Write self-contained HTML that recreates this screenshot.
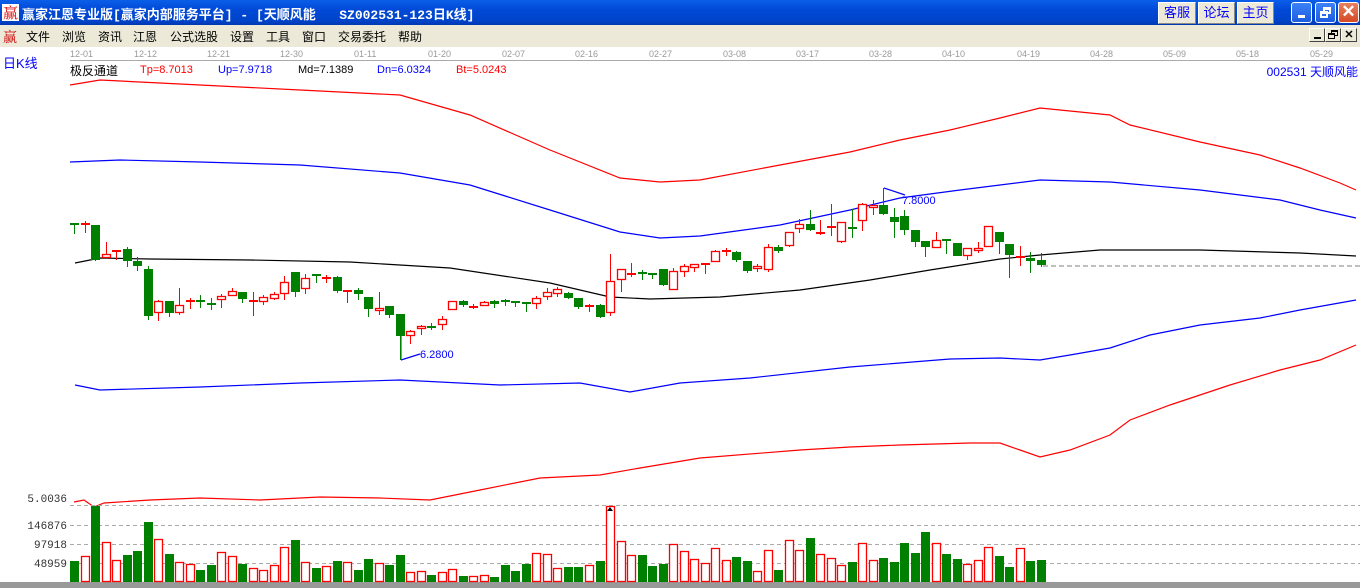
<!DOCTYPE html>
<html><head><meta charset="utf-8"><style>
*{margin:0;padding:0;box-sizing:border-box}
body{width:1360px;height:588px;overflow:hidden;background:#fff;font-family:"Liberation Sans","Noto Sans CJK SC",sans-serif;position:relative}
.title{position:absolute;left:0;top:0;width:1360px;height:25px;background:linear-gradient(#0a5ee8,#0149d6 40%,#0043c8 85%,#0038b0);}
.title .t{position:absolute;left:22px;top:4px;color:#fff;font-weight:bold;font-size:13px;font-family:"Liberation Mono","Noto Sans CJK SC",monospace;white-space:pre}
.ico{position:absolute;left:2px;top:4px;width:17px;height:17px;background:#fff;color:#d00;font-size:15px;line-height:17px;text-align:center;font-family:"Noto Serif CJK SC",serif}
.btn{position:absolute;top:2px;height:22px;background:#ece9d8;border:1px solid #fff;border-right-color:#888;border-bottom-color:#888;color:#00f;font-size:13px;line-height:20px;text-align:center}
.wb{position:absolute;top:2px;width:21px;height:21px;border:1px solid #fff;border-radius:3px;background:linear-gradient(#3d82f7,#1c5ce0)}
.menu{position:absolute;left:0;top:25px;width:1360px;height:22px;background:#ece9d8}
.menu span{position:absolute;top:3px;font-size:12px;color:#000}
.mdi{position:absolute;top:28px;width:16px;height:14px;background:#ece9d8;border:1px solid #fff;border-right-color:#444;border-bottom-color:#444}
.dt{position:absolute;top:49px;font-size:9px;color:#999}
</style></head><body>
<div class="title">
<div class="ico">赢</div>
<div class="t">赢家江恩专业版[赢家内部服务平台] - [天顺风能   SZ002531-123日K线]</div>
<div class="btn" style="left:1158px;width:38px">客服</div>
<div class="btn" style="left:1198px;width:37px">论坛</div>
<div class="btn" style="left:1237px;width:37px">主页</div>
<div class="wb" style="left:1291px"><div style="position:absolute;left:6px;top:12px;width:7px;height:3px;background:#fff"></div></div>
<div class="wb" style="left:1315px"><div style="position:absolute;left:7px;top:4px;width:8px;height:7px;border:2px solid #fff;border-top-width:3px"></div><div style="position:absolute;left:4px;top:8px;width:8px;height:7px;border:2px solid #fff;border-top-width:3px;background:#2a6cea"></div></div>
<div class="wb" style="left:1338px;background:linear-gradient(#e8805f,#d54a25);color:#fff;font-size:17px;line-height:18px;text-align:center;font-weight:bold">✕</div>
</div>
<div class="menu">
<span style="left:3px;color:#c00;font-size:14px;top:2px;font-family:'Noto Serif CJK SC',serif">赢</span>
<span style="left:26px">文件</span><span style="left:62px">浏览</span><span style="left:98px">资讯</span><span style="left:133px">江恩</span><span style="left:170px">公式选股</span><span style="left:230px">设置</span><span style="left:266px">工具</span><span style="left:302px">窗口</span><span style="left:338px">交易委托</span><span style="left:398px">帮助</span>
</div>
<div class="mdi" style="left:1309px"><div style="position:absolute;left:4px;top:8px;width:7px;height:2px;background:#000"></div></div>
<div class="mdi" style="left:1325px"><div style="position:absolute;left:5px;top:1px;width:7px;height:6px;border:1px solid #000;border-top-width:2px"></div><div style="position:absolute;left:2px;top:4px;width:7px;height:6px;border:1px solid #000;border-top-width:2px;background:#ece9d8"></div></div>
<div class="mdi" style="left:1341px;font-size:11px;font-weight:bold;text-align:center;line-height:12px">✕</div>

<div class="dt" style="left:70px">12-01</div><div class="dt" style="left:134px">12-12</div><div class="dt" style="left:207px">12-21</div><div class="dt" style="left:280px">12-30</div><div class="dt" style="left:354px">01-11</div><div class="dt" style="left:428px">01-20</div><div class="dt" style="left:502px">02-07</div><div class="dt" style="left:575px">02-16</div><div class="dt" style="left:649px">02-27</div><div class="dt" style="left:723px">03-08</div><div class="dt" style="left:796px">03-17</div><div class="dt" style="left:869px">03-28</div><div class="dt" style="left:942px">04-10</div><div class="dt" style="left:1017px">04-19</div><div class="dt" style="left:1090px">04-28</div><div class="dt" style="left:1163px">05-09</div><div class="dt" style="left:1236px">05-18</div><div class="dt" style="left:1310px">05-29</div>
<div style="position:absolute;left:70px;top:60px;width:1290px;height:1px;background:#aaa"></div>
<div style="position:absolute;left:3px;top:53px;font-size:13px;color:#00f">日K线</div>
<div style="position:absolute;left:70px;top:62px;font-size:12px;color:#000">极反通道</div>
<div style="position:absolute;left:140px;top:64px;font-size:11px;color:#f00">Tp=8.7013</div>
<div style="position:absolute;left:218px;top:64px;font-size:11px;color:#00f">Up=7.9718</div>
<div style="position:absolute;left:298px;top:64px;font-size:11px;color:#000">Md=7.1389</div>
<div style="position:absolute;left:377px;top:64px;font-size:11px;color:#00f">Dn=6.0324</div>
<div style="position:absolute;left:456px;top:64px;font-size:11px;color:#f00">Bt=5.0243</div>
<div style="position:absolute;right:2px;top:63px;font-size:12px;color:#00f">002531 天顺风能</div>

<svg style="position:absolute;left:0;top:0" width="1360" height="588">
<g fill="none" stroke-width="1.2">
<polyline stroke="#f00" points="70,85 100,80 200,85 300,90 400,95 470,115 550,150 620,178 660,182 700,180 780,165 850,152 900,140 950,130 1000,118 1040,108 1110,115 1130,125 1200,142 1260,155 1300,168 1340,183 1356,190"/>
<polyline stroke="#00f" points="70,162 120,160 200,162 300,165 400,173 470,185 550,210 620,232 660,238 700,236 780,225 850,210 900,198 960,190 1040,180 1110,182 1200,190 1280,200 1320,210 1356,218"/>
<polyline stroke="#000" points="75,263 100,258 150,259 250,260 350,262 450,268 550,283 610,297 650,299 720,297 800,290 870,280 930,270 1000,259 1040,255 1100,250 1200,250 1300,253 1356,256"/>
<line x1="1043" y1="266" x2="1360" y2="266" stroke="#999" stroke-dasharray="5,3"/>
<polyline stroke="#00f" points="75,385 100,390 200,387 300,383 400,380 500,385 580,383 630,392 680,383 750,378 850,367 950,359 1000,358 1040,360 1070,355 1110,348 1150,335 1200,325 1260,318 1300,310 1356,300"/>
<polyline stroke="#f00" points="74,502 84,500 94,507 104,503 150,500 200,498 260,500 320,497 380,498 430,500 480,490 540,478 600,475 640,468 700,458 800,450 850,447 900,445 970,443 1000,443 1020,450 1040,457 1070,450 1110,435 1130,420 1170,405 1230,385 1280,370 1320,360 1356,345"/>
<polyline stroke="#00f" points="401,360 420,354"/><line x1="401" y1="336" x2="401" y2="360" stroke="#080"/>
<polyline stroke="#00f" points="884,188 905,195"/>
</g>
<text x="420" y="358" font-size="11" fill="#00f" font-family="Liberation Sans">6.2800</text>
<text x="902" y="204" font-size="11" fill="#00f" font-family="Liberation Sans">7.8000</text>
<g stroke="#aaa" stroke-dasharray="4,3" stroke-width="1">
<line x1="70" y1="505.5" x2="1360" y2="505.5"/><line x1="70" y1="525.5" x2="1360" y2="525.5"/><line x1="70" y1="544.5" x2="1360" y2="544.5"/><line x1="70" y1="563.5" x2="1360" y2="563.5"/>
</g>
<g font-size="11" fill="#333" font-family="Liberation Mono" text-anchor="end">
<text x="67" y="502">5.0036</text><text x="67" y="529">146876</text><text x="67" y="548">97918</text><text x="67" y="567">48959</text>
</g>
<rect x="0" y="582" width="1360" height="6" fill="#999"/>
<g id="c"></g>
</svg>
<script>
var D=[["G",223,225,223,234],["R",223,225,221,233],["G",225,260,225,261],["R",254,258,242,258],["R",250,252,250,260],["G",249,261,247,267],["G",261,266,257,271],["G",269,316,266,320],["R",301,313,300,321],["G",301,313,301,317],["R",305,313,288,315],["R",300,302,298,309],["G",300,302,295,308],["G",303,305,298,310],["R",296,300,294,308],["R",291,296,288,296],["G",292,299,292,303],["R",300,302,292,316],["R",297,302,295,305],["R",294,299,292,300],["R",282,294,276,300],["G",272,292,272,297],["R",278,289,274,294],["G",274,275,274,283],["R",277,279,275,283],["G",277,291,276,293],["R",290,292,290,303],["G",290,294,288,300],["G",297,309,297,317],["R",308,311,292,315],["G",306,315,306,318],["G",314,336,314,360],["R",331,336,330,344],["R",326,329,325,335],["G",326,328,323,330],["R",319,325,316,330],["R",301,310,301,310],["G",301,305,300,307],["R",306,308,304,309],["R",302,306,301,306],["G",301,304,300,308],["G",300,302,299,306],["G",301,302,301,307],["G",302,303,302,312],["R",298,304,296,309],["R",292,297,288,300],["R",289,294,287,297],["G",293,298,292,299],["G",298,307,298,309],["R",305,307,304,312],["G",305,317,304,318],["R",281,313,254,316],["R",269,280,269,292],["R",273,275,263,277],["G",272,274,270,280],["G",273,275,273,279],["G",269,285,269,286],["R",271,290,268,290],["R",266,272,264,277],["R",264,268,264,272],["R",263,265,263,274],["R",251,262,250,262],["R",250,252,248,256],["G",252,260,251,262],["G",261,271,261,273],["R",266,269,264,272],["R",247,270,244,272],["G",247,251,245,253],["R",232,246,232,247],["R",224,229,219,233],["G",224,230,210,231],["R",232,234,220,235],["R",226,228,204,236],["R",222,242,222,243],["G",227,228,209,238],["R",204,221,203,231],["R",205,208,200,215],["G",205,214,188,215],["G",217,222,208,238],["G",216,230,210,235],["G",230,242,230,247],["G",241,247,241,257],["R",240,248,232,248],["G",239,241,239,254],["G",243,256,243,256],["R",248,256,248,260],["R",248,251,242,253],["R",226,247,226,247],["G",232,242,232,254],["G",244,255,244,278],["R",256,258,246,266],["G",258,261,252,273],["G",260,265,253,267]];
var V=[561,556,506,542,560,555,551,522,539,554,562,564,570,565,552,556,564,568,570,565,547,540,562,568,566,561,562,570,559,563,565,555,572,571,575,572,569,576,576,575,577,565,571,564,553,554,568,567,567,565,561,506,541,555,555,566,564,544,551,559,563,548,560,557,561,571,550,570,540,550,538,554,558,565,562,543,560,558,562,543,553,532,543,554,559,564,560,547,556,567,548,561,560];
var VC="GRGRRGGGRGRRGGRRGRRRRGRGRGRGGRGGRRGRRGRRGGGGRRRGGRGRRRGGGRRRRRRGGRRGRRGRRRGRRGGGGGRGGRRRGGRGG";
var s="";
for(var i=0;i<D.length;i++){var x=Math.round(74+10.51*i),d=D[i],c=d[0]=="R"?"#f00":"#008000";
s+='<line x1="'+(x+.5)+'" y1="'+d[3]+'" x2="'+(x+.5)+'" y2="'+d[4]+'" stroke="'+c+'"/>';
var h=Math.max(d[2]-d[1],2);
if(d[0]=="R"&&d[2]-d[1]>2)s+='<rect x="'+(x-3.5)+'" y="'+(d[1]+.5)+'" width="8" height="'+(h-1)+'" fill="#fff" stroke="#f00" stroke-width="1.3"/>';
else s+='<rect x="'+(x-4)+'" y="'+d[1]+'" width="9" height="'+h+'" fill="'+c+'"/>';
var v=V[i];
if(VC[i]=="R")s+='<rect x="'+(x-3.5)+'" y="'+(v+.5)+'" width="8" height="'+(582-v-1)+'" fill="#fff" stroke="#f00" stroke-width="1.3"/>';
else s+='<rect x="'+(x-4)+'" y="'+v+'" width="9" height="'+(582-v)+'" fill="#008000"/>';}
s+='<path d="M607,511 L610,507 L613,511 Z" fill="#000"/>';
document.getElementById("c").innerHTML=s;
</script>
</body></html>
